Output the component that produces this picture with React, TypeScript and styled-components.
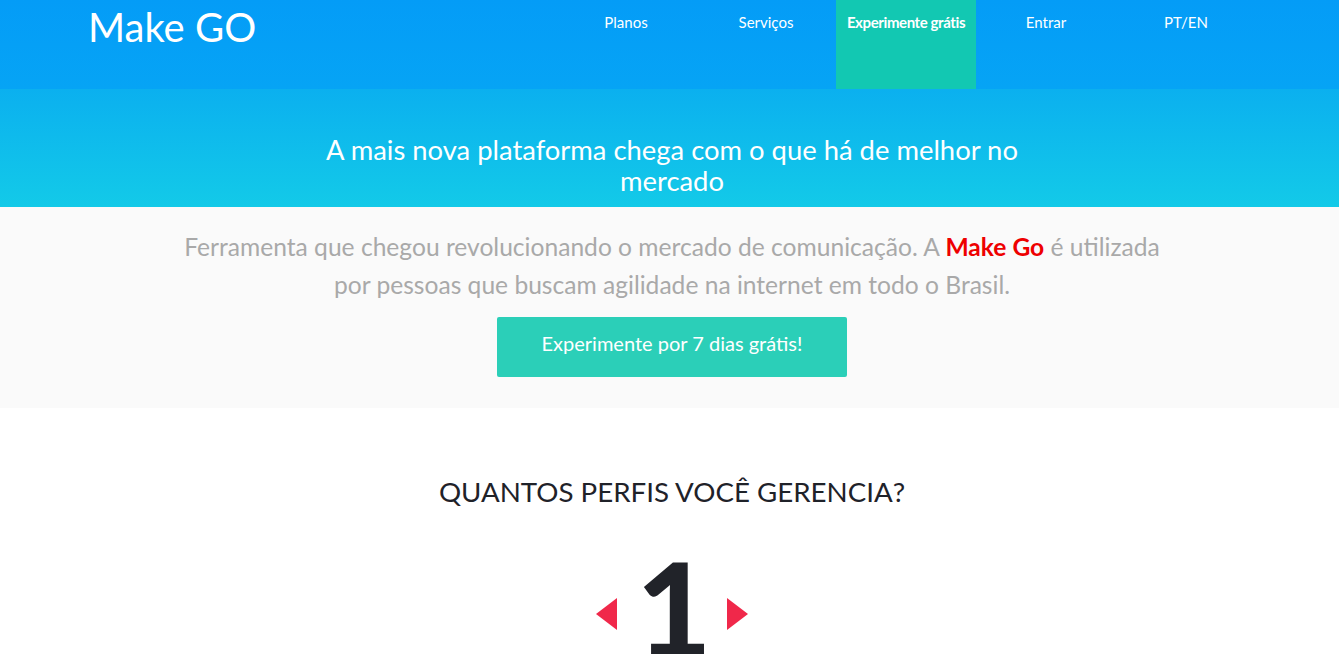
import React, { useState } from "react";
import styled, { createGlobalStyle } from "styled-components";

const Global = createGlobalStyle`
  html, body { margin: 0; padding: 0; }
  body {
    font-family: Lato, "Open Sans", sans-serif;
    background: #ffffff;
    overflow: hidden;
  }
  * { box-sizing: border-box; }
`;

const Header = styled.header`
  height: 89px;
  padding-left: 3px;
  background: linear-gradient(180deg, #049cf7 0%, #06a4f5 100%);
`;

const HeaderInner = styled.div`
  width: 1170px;
  margin: 0 auto;
  height: 100%;
  display: flex;
  justify-content: space-between;
  align-items: stretch;
`;

const Logo = styled.a`
  color: #ffffff;
  font-size: 40px;
  line-height: 1.2;
  padding-top: 3px;
  margin-left: 2px;
  text-decoration: none;
`;

const Nav = styled.nav`
  display: flex;
  align-items: stretch;
`;

const NavItem = styled.a<{ $active?: boolean }>`
  width: 140px;
  display: block;
  text-align: center;
  color: #ffffff;
  font-size: 15px;
  line-height: 18px;
  padding-top: 13px;
  font-weight: ${(p) => (p.$active ? 700 : 400)};
  background: ${(p) => (p.$active ? "#12c8b2" : "transparent")};
  text-decoration: none;
  letter-spacing: ${(p) => (p.$active ? "-0.4px" : "0")};
`;

const Hero = styled.section`
  height: 118px;
  padding-left: 5px;
  background: linear-gradient(180deg, #0bb0ef 0%, #13cae8 100%);
  display: flex;
  justify-content: center;
  padding-top: 45px;
`;

const HeroTitle = styled.h1`
  margin: 0;
  width: 740px;
  text-align: center;
  color: #ffffff;
  font-weight: 400;
  font-size: 27.4px;
  line-height: 31px;
`;

const Intro = styled.section`
  background: #fafafa;
  height: 201px;
  padding-left: 5px;
  display: flex;
  flex-direction: column;
  align-items: center;
  padding-top: 21px;
`;

const IntroText = styled.p`
  margin: 0;
  width: 1000px;
  text-align: center;
  color: #a9a9a9;
  font-size: 24.6px;
  line-height: 38px;
`;

const Brand = styled.span`
  color: #ee0000;
  font-weight: 700;
`;

const CtaButton = styled.button`
  margin-top: 13px;
  width: 350px;
  height: 60px;
  padding: 0 0 8px;
  border: 0;
  border-radius: 2px;
  background: #2bcfb8;
  color: #ffffff;
  font-family: Lato, sans-serif;
  font-size: 20px;
  cursor: pointer;
`;

const Pricing = styled.section`
  display: flex;
  flex-direction: column;
  align-items: center;
  padding-left: 5px;
  padding-top: 68px;
`;

const PricingTitle = styled.h2`
  margin: 0;
  color: #1f2229;
  font-weight: 400;
  font-size: 27.7px;
  line-height: 32px;
`;

const Counter = styled.div`
  margin-top: 45px;
  display: flex;
  align-items: flex-start;
`;

const Arrow = styled.button<{ $dir: "left" | "right" }>`
  margin-top: 45px;
  width: 0;
  height: 0;
  padding: 0;
  border-top: 16px solid transparent;
  border-bottom: 16px solid transparent;
  ${(p) =>
    p.$dir === "left"
      ? "border-right: 21px solid #f0284a; border-left: 0; margin-right: 19px;"
      : "border-left: 21px solid #f0284a; border-right: 0; margin-left: 15px;"}
  background: transparent;
  cursor: pointer;
`;

const Count = styled.div`
  color: #212329;
  font-weight: 900;
  font-size: 130px;
  line-height: 100px;
  padding-top: 4px;
  height: 140px;
`;

export default function App() {
  const [count, setCount] = useState(1);
  return (
    <>
      <Global />
      <Header>
        <HeaderInner>
          <Logo href="#">Make GO</Logo>
          <Nav>
            <NavItem href="#">Planos</NavItem>
            <NavItem href="#">Serviços</NavItem>
            <NavItem href="#" $active>
              Experimente grátis
            </NavItem>
            <NavItem href="#">Entrar</NavItem>
            <NavItem href="#">PT/EN</NavItem>
          </Nav>
        </HeaderInner>
      </Header>
      <Hero>
        <HeroTitle>A mais nova plataforma chega com o que há de melhor no mercado</HeroTitle>
      </Hero>
      <Intro>
        <IntroText>
          Ferramenta que chegou revolucionando o mercado de comunicação. A <Brand>Make Go</Brand> é utilizada por
          pessoas que buscam agilidade na internet em todo o Brasil.
        </IntroText>
        <CtaButton>Experimente por 7 dias grátis!</CtaButton>
      </Intro>
      <Pricing>
        <PricingTitle>QUANTOS PERFIS VOCÊ GERENCIA?</PricingTitle>
        <Counter>
          <Arrow $dir="left" aria-label="menos" onClick={() => setCount((c) => Math.max(1, c - 1))} />
          <Count>{count}</Count>
          <Arrow $dir="right" aria-label="mais" onClick={() => setCount((c) => c + 1)} />
        </Counter>
      </Pricing>
    </>
  );
}
